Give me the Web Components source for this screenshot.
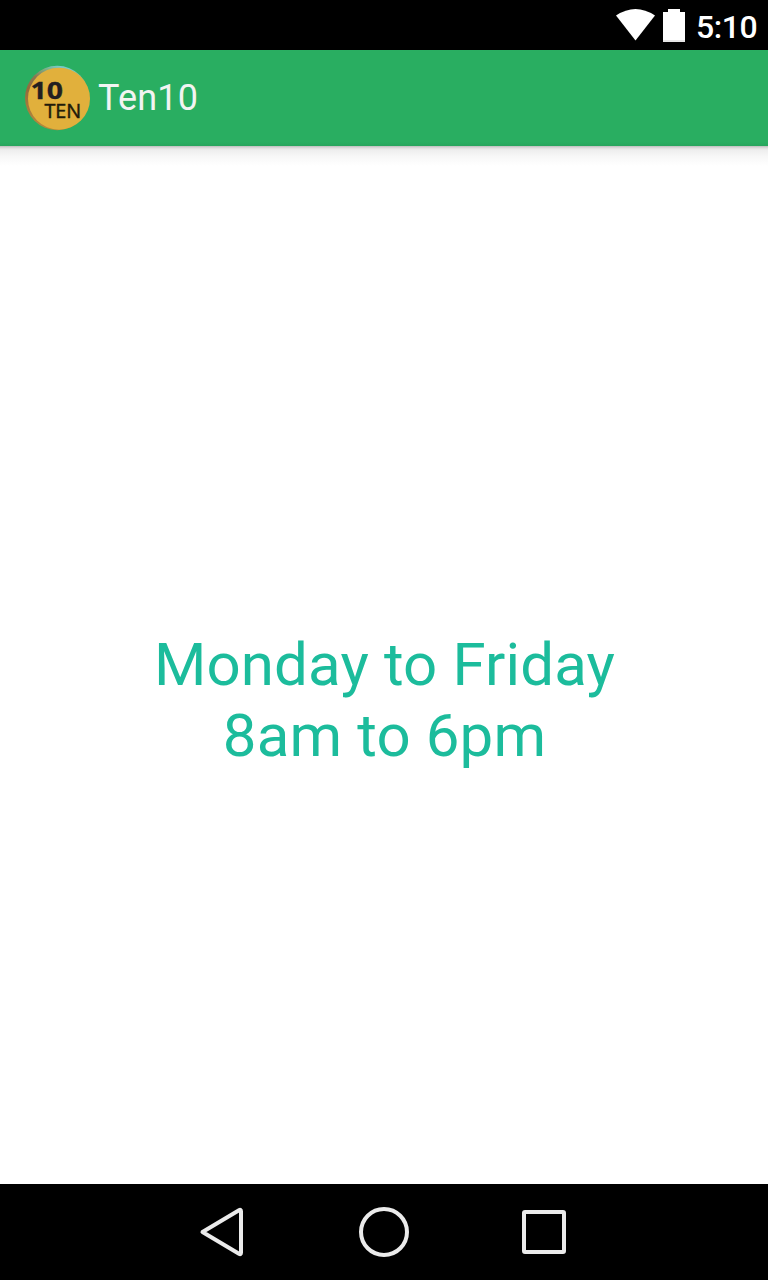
<!DOCTYPE html>
<html lang="en">
<head>
<meta charset="utf-8">
<title>Ten10</title>
<style>
html, body { margin: 0; height: 100%; background: #fff; }
body { font-family: Roboto, sans-serif; overflow: hidden; }
</style>
</head>
<body>
<ten-screen>
  <status-bar slot="status">5:10</status-bar>
  <app-bar slot="bar"><ten-logo slot="logo"></ten-logo>Ten10</app-bar>
  <opening-hours><span>Monday to Friday</span><span>8am to 6pm</span></opening-hours>
  <nav-bar slot="nav"></nav-bar>
</ten-screen>
<script>
const define = (name, html) => customElements.define(name, class extends HTMLElement {
  constructor() {
    super();
    this.attachShadow({ mode: 'open' }).innerHTML = html;
  }
});

define('ten-screen', `
<style>
:host { display: grid; grid-template-rows: 50px 96px 1fr 96px; width: 768px; height: 1280px; background: #fff; }
</style>
<slot name="status"></slot><slot name="bar"></slot><slot></slot><slot name="nav"></slot>`);

define('status-bar', `
<style>
:host { display: flex; justify-content: flex-end; align-items: center; box-sizing: border-box; padding-right: 10px;
  background: #000; color: #fff; font-size: 32px; font-weight: 500; line-height: 50px; }
svg { display: block; flex: none; }
.battery { margin: 0 11px 0 7px; }
.time { width: 62px; padding-top: 3px; letter-spacing: -.4px; white-space: nowrap; }
</style>
<svg width="40" height="50" viewBox="616 0 40 50"><path d="M616 15.500Q635.500 2.500 655 15.500L635.500 40.500Z" fill="#fff"/></svg>
<svg class="battery" width="22" height="50" viewBox="663 0 22 50"><path d="M668 9h12v3h5v30h-22V12h5z" fill="#fff"/><path d="M663 40h22v2h-22z" fill="#e6e6e6"/></svg>
<span class="time"><slot></slot></span>`);

define('app-bar', `
<style>
:host { display: flex; align-items: center; position: relative; box-sizing: border-box; padding-left: 24px;
  background: linear-gradient(#29ae61 0 92px, #27a55c 96px); color: #f2f4f2; font-size: 36px; line-height: 96px; }
:host::after { content: ""; position: absolute; left: 0; right: 0; top: 96px; height: 20px;
  background: linear-gradient(#bdbdbd 0, #dedede 2px, #eee 4px, #f7f7f7 10px, #fff 20px); }
.title { margin-left: 6px; letter-spacing: .2px; }
</style>
<slot name="logo"></slot><span class="title"><slot></slot></span>`);

define('ten-logo', `
<style>
:host { display: block; width: 68px; height: 96px; flex: none; }
svg { display: block; }
</style>
<svg width="68" height="96" viewBox="24 50 68 96">
  <defs><linearGradient id="rim" x1=".5" y1="0" x2=".2" y2="1">
    <stop offset="0" stop-color="#79c9c5"/><stop offset=".09" stop-color="#7db18a"/><stop offset=".25" stop-color="#8b7650"/><stop offset=".45" stop-color="#94693c"/><stop offset="1" stop-color="#b98c3c"/>
  </linearGradient></defs>
  <circle cx="57.200" cy="98" r="32.200" fill="url(#rim)"/>
  <circle cx="59" cy="98.700" r="31" fill="#e1b03c"/>
  <text x="30.500" y="98.500" font-family="Open Sans" font-weight="700" font-size="24" fill="#231f20" stroke="#231f20" stroke-width=".3" textLength="32.500" lengthAdjust="spacingAndGlyphs">10</text>
  <text x="44.500" y="118" font-family="Open Sans" font-size="19.500" fill="#211a0a" stroke="#211a0a" stroke-width=".5" textLength="36.700" lengthAdjust="spacingAndGlyphs">TEN</text>
</svg>`);

define('opening-hours', `
<style>
:host { display: flex; flex-direction: column; align-items: center; justify-content: center; box-sizing: border-box;
  padding: 70px 0 0 1px; color: #1cbc9c; font-size: 60px; line-height: 71px; letter-spacing: .13px; text-align: center; }
</style>
<slot></slot>`);

define('nav-bar', `
<style>
:host { display: flex; justify-content: center; background: #000; }
svg { display: block; width: 160px; height: 96px; fill: none; stroke: #ebebeb; stroke-width: 4; stroke-linejoin: round; }
</style>
<svg viewBox="144 1184 160 96"><path d="M202.500 1232L239 1210.200Q241 1209 241 1211.500V1252.500Q241 1255 239 1253.800Z"/></svg>
<svg viewBox="304 1184 160 96"><circle cx="384" cy="1232" r="23"/></svg>
<svg viewBox="464 1184 160 96"><rect x="524" y="1212" width="40" height="40" rx="1"/></svg>`);
</script>
</body>
</html>
